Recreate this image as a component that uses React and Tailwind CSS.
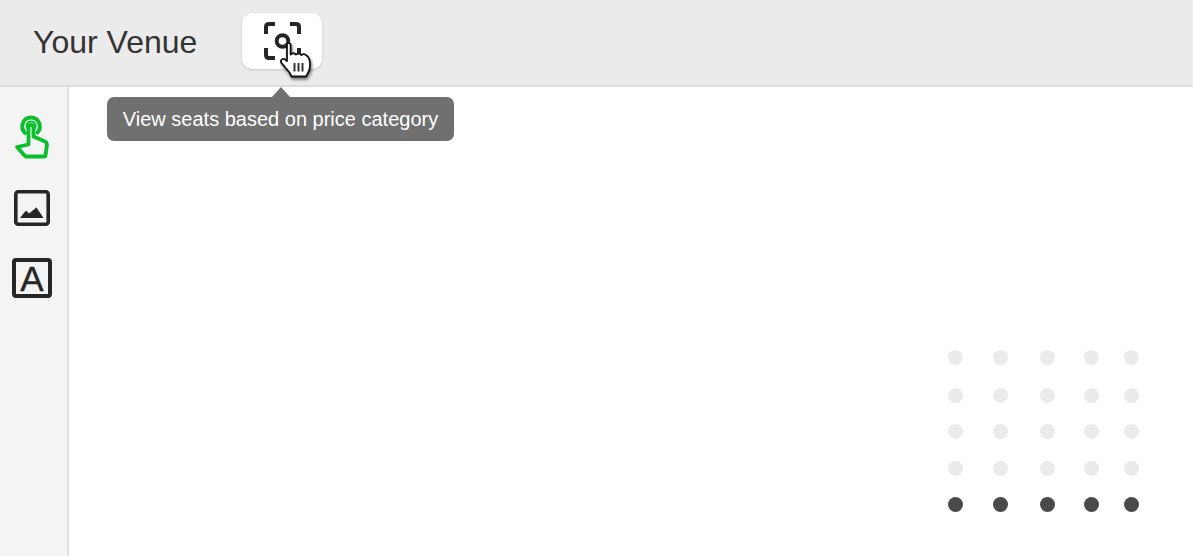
import React from "react";

const dotCols = [0, 1, 2, 3, 4];
const dotRows = ["row-a", "row-b", "row-c", "row-d"];

function FocusIcon() {
  return (
    <svg width="37" height="38" viewBox="0 0 37 38" fill="none" stroke="#262626" strokeWidth="4" strokeLinejoin="round">
      <path d="M2 12V5Q2 2 5 2H11" />
      <path d="M26 2H32Q35 2 35 5V12" />
      <path d="M2 26V33Q2 36 5 36H11" />
      <path d="M26 36H32Q35 36 35 33V26" />
      <circle cx="18.500" cy="19" r="5.800" />
    </svg>
  );
}

function HandCursor() {
  return (
    <svg width="34" height="36" viewBox="0 0 34 36" className="drop-shadow-[1px_2px_1.500px_rgba(0,0,0,0.55)]">
      <path
        d="M7 1.500Q7 0 8.800 0Q10.600 0 10.600 1.500V11.500Q13.500 9 16 11.500Q19 9.500 21.500 12Q24 10 26.500 12.500Q29.500 14.500 30 20Q30.500 26 28 30L26 33.500H11.500L9.500 29.500L1.500 20Q0 17.500 2.500 16Q4.500 15.500 7 18V1.500Z"
        fill="#fff"
        stroke="#111"
        strokeWidth="1.800"
        strokeLinejoin="round"
      />
      <path d="M14.500 20V28.500M18.500 20V28.500M22.500 20V28.500" stroke="#333" strokeWidth="2" />
    </svg>
  );
}

function TouchIcon() {
  return (
    <svg width="36" height="46" viewBox="0 0 36 46" fill="none" stroke="#0bbf2c" strokeLinejoin="round" strokeLinecap="round">
      <path d="M11 19C5.500 13 9 3.500 17 3.500C25 3.500 28.500 13 23.500 18.500" strokeWidth="4" />
      <path d="M13 14C11.500 10 14 7.500 17 7.500C20 7.500 22.500 10 21.500 14" strokeWidth="2" />
      <path d="M14.500 12.500C14.500 10.500 19.500 10.500 19.500 12.500V22.500L31 27.500C32.500 28.300 33 29 33 30.500L31.500 41.500C31.400 42.300 31 42.500 30 42.500H11.500L3 33L14.500 30.500V12.500Z" strokeWidth="3.800" />
    </svg>
  );
}

function ImageIcon() {
  return (
    <svg width="36" height="36" viewBox="0 0 36 36" fill="none">
      <rect x="1.800" y="1.800" width="32.400" height="32.400" rx="2.500" stroke="#262626" strokeWidth="3.600" />
      <path d="M6 28L12 20.500L15 23.500L22.500 17.500L29.500 28Z" fill="#262626" />
    </svg>
  );
}

export default function App() {
  return (
    <div className="relative flex h-[556px] w-[1193px] flex-col overflow-hidden bg-white font-['Liberation_Sans',Arial,sans-serif]">
      <header className="flex h-[87px] shrink-0 items-start border-b-2 border-[#dcdcdc] bg-[#ebebeb]">
        <h1 className="ml-[33px] mt-[24px] w-[209px] text-[32px] font-normal leading-[37px] text-[#333333]">Your Venue</h1>
        <button type="button" className="relative mt-[13px] flex h-[56px] w-[80px] items-center justify-center rounded-[10px] bg-white shadow-[0_1px_3px_rgba(0,0,0,0.15)]">
          <FocusIcon />
          <span className="absolute left-[38px] top-[30px]">
            <HandCursor />
          </span>
        </button>
      </header>

      <div className="flex min-h-0 flex-1">
        <aside className="flex w-[69px] shrink-0 flex-col items-center border-r-2 border-[#dfdfdf] bg-[#f4f4f4] pr-[3px] pt-[27px]">
          <TouchIcon />
          <div className="mt-[30px]">
            <ImageIcon />
          </div>
          <div className="mt-[32px] flex h-[40px] w-[40px] items-center justify-center rounded-[4px] border-[4px] border-[#262626] text-[35px] leading-none text-[#262626] [-webkit-text-stroke:0.4px_#262626]">
            A
          </div>
        </aside>

        <main className="flex flex-1 items-end justify-end pb-[44px] pr-[54px]">
          <div className="grid grid-cols-[45px_47px_44px_40px_15px] grid-rows-[38px_36px_37px_36px_15px]">
            {dotRows.map((row) =>
              dotCols.map((col) => <span key={row + col} className="h-[15px] w-[15px] rounded-full bg-[#ebebeb]" />)
            )}
            {dotCols.map((col) => (
              <span key={col} className="h-[15px] w-[15px] rounded-full bg-[#4a4a4a]" />
            ))}
          </div>
        </main>
      </div>

      {/* tooltip under the focus button */}
      <div className="absolute left-[107px] top-[97px] flex h-[44px] w-[347px] items-center justify-center rounded-[7px] bg-[#707070] text-[20px] text-white">
        <span className="absolute left-[165px] top-[-10px] h-0 w-0 border-x-[9px] border-b-[10px] border-x-transparent border-b-[#707070]" />
        View seats based on price category
      </div>
    </div>
  );
}
